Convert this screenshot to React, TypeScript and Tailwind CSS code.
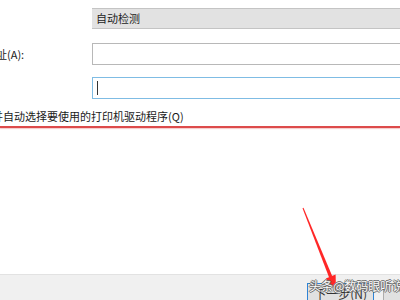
import React from "react";

export default function App() {
  const font = { fontFamily: '"Noto Sans CJK SC", "Noto Sans", sans-serif' };
  return (
    <div className="relative w-[400px] h-[300px] overflow-hidden bg-white flex flex-col text-[11px] text-[#1a1a1a]" style={font}>
      <div className="flex flex-col flex-1">
        <div className="pt-[8px] pl-[92px]">
          <div className="h-[21px] bg-[#e2e2e2] border-y border-[#c4c4c4] flex items-center pl-[4px] leading-none text-[#222]">
            自动检测
          </div>
        </div>
        <div className="mt-[14px] flex items-center h-[22px]">
          <div className="w-[96px] ml-[-4px] leading-none">址(A):</div>
          <div className="flex-1 h-[22px] border-y border-l border-[#b8b8b8] bg-white"></div>
        </div>
        <div className="mt-[12px] pl-[92px]">
          <div className="h-[22px] border-y border-l border-[#7fbce4] bg-white flex items-center pl-[4px]">
            <div className="w-[1px] h-[14px] bg-[#333]"></div>
          </div>
        </div>
        <div className="mt-[12px] ml-[-8px] leading-none whitespace-nowrap">
          并自动选择要使用的打印机驱动程序(Q)
        </div>
        <div className="mt-[4px] h-[2px] bg-[#dd4b4b] shadow-[0_1px_1px_rgba(230,120,120,0.4)]"></div>
        <div className="flex-1"></div>
      </div>
      <div className="h-[26px] bg-[#f0f0f0] border-t border-[#e2e2e2] flex items-end">
        <div className="ml-[307px] w-[81px] h-[17px] border-t border-x border-[#2f83d6] bg-[#e1e1e1] flex items-start justify-center pt-[4px]">
          <span className="text-[12px] leading-none text-[#333]">下一步(N)</span>
        </div>
        <div className="ml-[9px] w-[20px] h-[17px] border-t border-l border-[#adadad] bg-[#e1e1e1]"></div>
      </div>

      <svg className="absolute left-0 top-0" width="400" height="300" viewBox="0 0 400 300">
        <polygon
          points="302.5,208.2 303.5,207.8 332.4,276.4 329.2,277.8"
          fill="#ff2727"
        />
        <polygon points="336,291 335.6,274.6 325.8,278.6" fill="#ff2727" />
      </svg>
      <div
        className="absolute left-[309px] top-[280px] text-[12px] leading-none text-[#fafafa] whitespace-nowrap"
        style={{
          textShadow:
            "1px 0 0 #6a6a6a, -1px 0 0 #6a6a6a, 0 1px 0 #6a6a6a, 0 -1px 0 #6a6a6a",
        }}
      >
        头条@数码眼听说
      </div>
    </div>
  );
}
